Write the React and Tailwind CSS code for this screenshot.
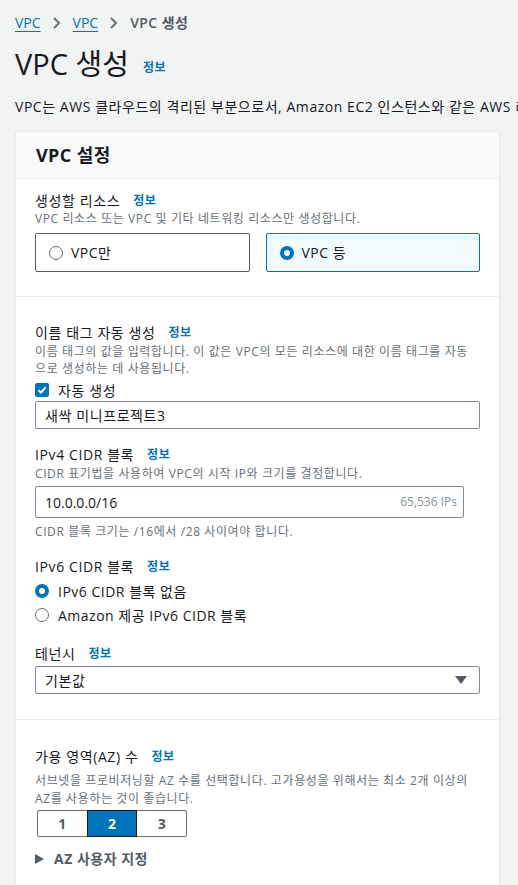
import { useState } from 'react'

const font = { fontFamily: '"Open Sans", "Noto Sans CJK KR", sans-serif' }

function Info() {
  return <span className="ml-[13px] text-[12px] font-bold tracking-[0.5px] text-[#0073bb]">정보</span>
}

function Label({ children }) {
  return (
    <div className="h-[20px] flex items-center text-[14px] leading-[20px] tracking-[0.6px] text-[#16191f]">
      {children}
      <Info />
    </div>
  )
}

function Radio({ checked }) {
  return checked ? (
    <span className="w-[14px] h-[14px] rounded-full border-[4px] border-[#0073bb] bg-white shrink-0" />
  ) : (
    <span className="w-[14px] h-[14px] rounded-full border-[1.5px] border-[#687078] bg-white shrink-0" />
  )
}

function Chevron() {
  return (
    <svg width="10" height="14" viewBox="0 0 10 14" className="mx-[11px]">
      <path d="M2 2l5 5-5 5" fill="none" stroke="#687078" strokeWidth="2" />
    </svg>
  )
}

export default function App() {
  const [resource, setResource] = useState('more')
  const [ipv6, setIpv6] = useState('none')
  const [az, setAz] = useState(2)

  return (
    <div className="w-full min-h-screen bg-[#f2f3f3] overflow-hidden pl-[15px] pr-[18px]" style={font}>
      {/* breadcrumb */}
      <div className="h-[46px] flex items-center text-[14px] pb-[1px]">
        <span className="text-[#0073bb] underline underline-offset-[3px]">VPC</span>
        <Chevron />
        <span className="text-[#0073bb] underline underline-offset-[3px]">VPC</span>
        <Chevron />
        <span className="text-[#545b64] font-semibold tracking-[0.4px]">VPC 생성</span>
      </div>

      {/* title */}
      <div className="flex items-end h-[36px]">
        <h1 className="text-[29px] leading-[36px] text-[#16191f]">VPC 생성</h1>
        <span className="ml-[14px] mb-[5px] text-[12px] font-bold tracking-[0.5px] text-[#0073bb]">정보</span>
      </div>
      <p className="mt-[15px] -mr-[18px] text-[14px] leading-[20px] tracking-[0.55px] text-[#16191f] whitespace-nowrap">
        VPC는 AWS 클라우드의 격리된 부분으로서, Amazon EC2 인스턴스와 같은 AWS 리소스를 포함합니다.
      </p>

      {/* card */}
      <div className="mt-[14px] bg-white border border-[#eaeded] shadow-[0_1px_1px_rgba(0,28,36,0.2)]">
        <div className="h-[47px] bg-[#fafafa] border-b border-[#eaeded] px-[20px] flex items-center">
          <h2 className="text-[18px] font-bold tracking-[0.4px] text-[#16191f]">VPC 설정</h2>
        </div>

        {/* resources */}
        <div className="px-[19px] pt-[12px] pb-[24px] border-b border-[#eaeded]">
          <Label>생성할 리소스</Label>
          <p className="text-[12px] leading-[16px] tracking-[0.6px] text-[#687078]">VPC 리소스 또는 VPC 및 기타 네트워킹 리소스만 생성합니다.</p>
          <div className="mt-[6px] grid grid-cols-2 gap-[16px]">
            <button
              onClick={() => setResource('vpc')}
              className={`h-[39px] flex items-center gap-[8px] px-[13px] rounded-[2px] border text-[14px] tracking-[0.5px] text-[#16191f] ${
                resource === 'vpc' ? 'border-[#0073bb] bg-[#f1faff]' : 'border-[#545b64] bg-white'
              }`}
            >
              <Radio checked={resource === 'vpc'} />
              VPC만
            </button>
            <button
              onClick={() => setResource('more')}
              className={`h-[39px] flex items-center gap-[8px] px-[13px] rounded-[2px] border text-[14px] tracking-[0.5px] text-[#16191f] ${
                resource === 'more' ? 'border-[#0073bb] bg-[#f1faff]' : 'border-[#545b64] bg-white'
              }`}
            >
              <Radio checked={resource === 'more'} />
              VPC 등
            </button>
          </div>
        </div>

        {/* settings */}
        <div className="px-[19px] pt-[26px] pb-[25px] border-b border-[#eaeded]">
          <Label>이름 태그 자동 생성</Label>
          <p className="text-[12px] leading-[17px] tracking-[0.6px] text-[#687078] pr-[6px]">
            이름 태그의 값을 입력합니다. 이 값은 VPC의 모든 리소스에 대한 이름 태그를 자동으로 생성하는 데 사용됩니다.
          </p>
          <div className="mt-[4px] h-[18px] flex items-center gap-[9px] text-[14px] tracking-[0.6px] text-[#16191f]">
            <span className="w-[14px] h-[14px] rounded-[2px] bg-[#0073bb] flex items-center justify-center">
              <svg width="10" height="10" viewBox="0 0 10 10">
                <path d="M1.5 5.2l2.4 2.4L8.6 2.4" fill="none" stroke="white" strokeWidth="2" />
              </svg>
            </span>
            자동 생성
          </div>
          <div className="mt-[2px] h-[28px] border border-[#7d8998] rounded-[2px] px-[9px] flex items-center text-[14px] tracking-[0.6px] text-[#16191f]">
            새싹 미니프로젝트3
          </div>

          <div className="mt-[16px]">
            <Label>IPv4 CIDR 블록</Label>
          </div>
          <p className="text-[12px] leading-[17px] tracking-[0.6px] text-[#687078]">CIDR 표기법을 사용하여 VPC의 시작 IP와 크기를 결정합니다.</p>
          <div className="mt-[4px] w-[429px] h-[32px] border border-[#7d8998] rounded-[2px] pl-[9px] pr-[6px] flex items-center justify-between">
            <span className="text-[14px] text-[#16191f]">10.0.0.0/16</span>
            <span className="text-[12px] text-[#879596]">65,536 IPs</span>
          </div>
          <p className="mt-[5px] text-[12px] leading-[17px] tracking-[0.6px] text-[#687078]">CIDR 블록 크기는 /16에서 /28 사이여야 합니다.</p>

          <div className="mt-[17px]">
            <Label>IPv6 CIDR 블록</Label>
          </div>
          <div className="mt-[2px] flex flex-col">
            <button onClick={() => setIpv6('none')} className="h-[24px] flex items-center gap-[9px] text-[14px] tracking-[0.5px] text-[#16191f]">
              <Radio checked={ipv6 === 'none'} />
              IPv6 CIDR 블록 없음
            </button>
            <button onClick={() => setIpv6('amazon')} className="h-[24px] flex items-center gap-[9px] text-[14px] tracking-[0.5px] text-[#16191f]">
              <Radio checked={ipv6 === 'amazon'} />
              Amazon 제공 IPv6 CIDR 블록
            </button>
          </div>

          <div className="mt-[17px]">
            <Label>테넌시</Label>
          </div>
          <div className="mt-[2px] h-[28px] border border-[#7d8998] rounded-[2px] pl-[9px] pr-[12px] flex items-center justify-between text-[14px] tracking-[0.6px] text-[#16191f]">
            기본값
            <svg width="12" height="8" viewBox="0 0 12 8">
              <path d="M0 0h12L6 8z" fill="#545b64" />
            </svg>
          </div>
        </div>

        {/* AZ */}
        <div className="px-[19px] pt-[27px] pb-[20px]">
          <Label>가용 영역(AZ) 수</Label>
          <p className="mt-[5px] text-[12px] leading-[18px] tracking-[0.6px] text-[#687078] pr-[6px]">
            서브넷을 프로비저닝할 AZ 수를 선택합니다. 고가용성을 위해서는 최소 2개 이상의 AZ를 사용하는 것이 좋습니다.
          </p>
          <div className="mt-[2px] ml-[2px] flex w-[150px] h-[27px]">
            {[1, 2, 3].map((n, i) => (
              <button
                key={n}
                onClick={() => setAz(n)}
                className={`flex-1 flex items-center justify-center text-[14px] font-bold border ${
                  i === 0 ? 'rounded-l-[2px]' : '-ml-px'
                } ${i === 2 ? 'rounded-r-[2px]' : ''} ${
                  az === n ? 'bg-[#0073bb] border-[#16191f] text-white relative' : 'bg-white border-[#687078] text-[#545b64]'
                }`}
              >
                {n}
              </button>
            ))}
          </div>
          <div className="mt-[11px] flex items-center gap-[10px] text-[14px] font-bold tracking-[0.5px] text-[#545b64]">
            <svg width="9" height="10" viewBox="0 0 9 10">
              <path d="M0 0l9 5-9 5z" fill="#545b64" />
            </svg>
            AZ 사용자 지정
          </div>
        </div>
      </div>
    </div>
  )
}
